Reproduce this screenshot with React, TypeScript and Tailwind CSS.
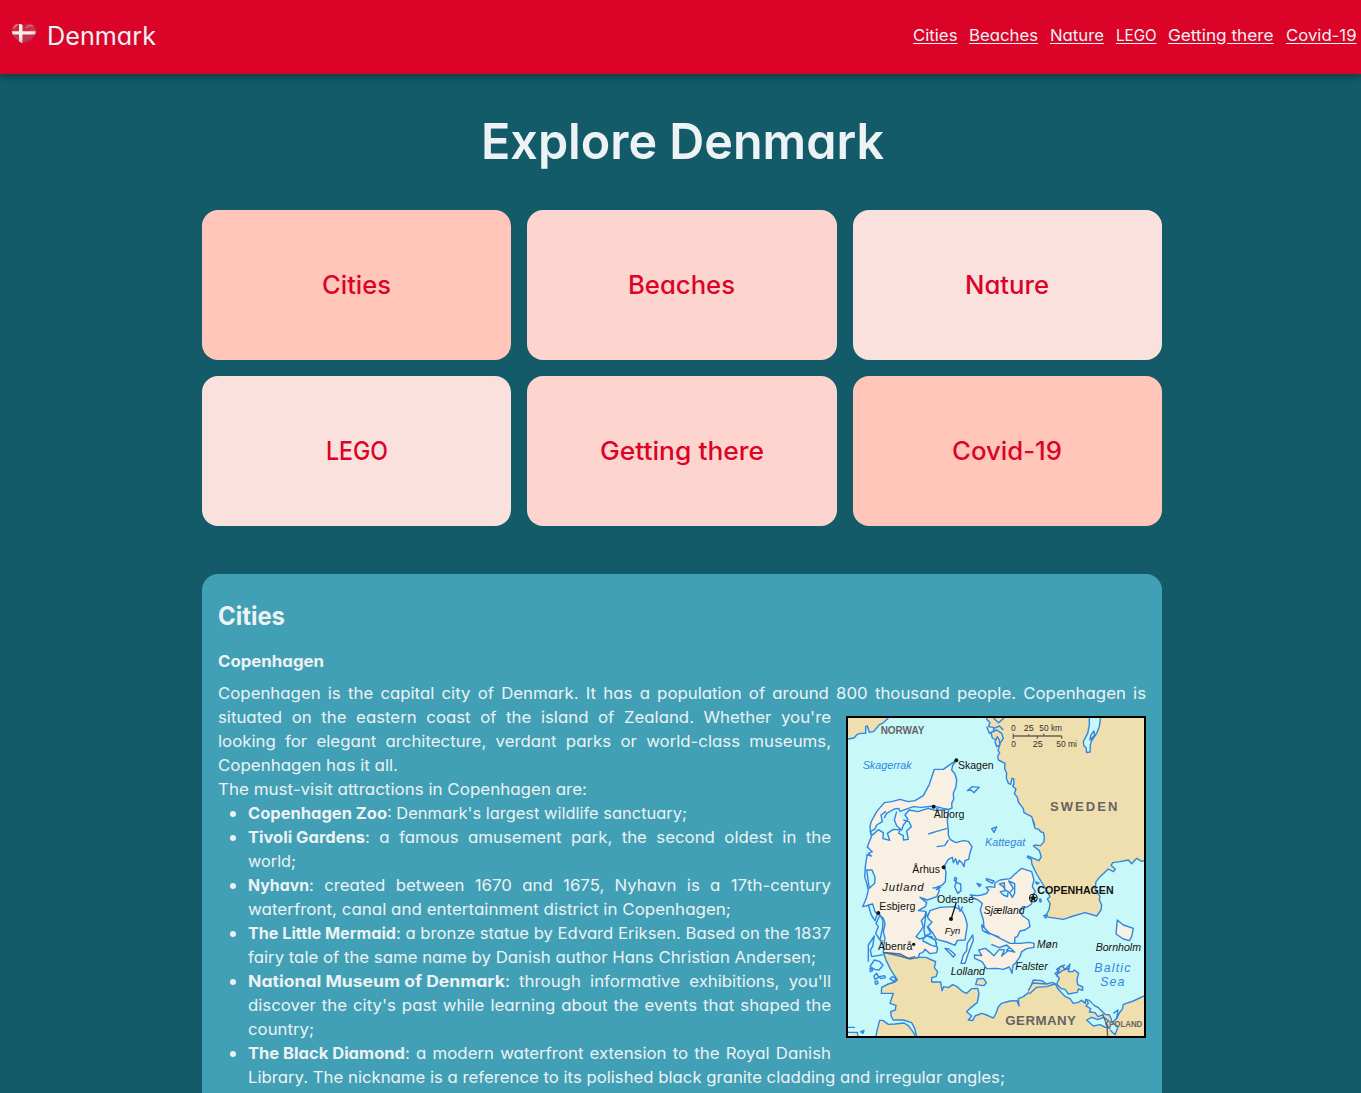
import { useLayoutEffect, useRef } from "react";
import type { ReactNode } from "react";

type RunProps = { w: number; children: string; justify?: boolean; className?: string; textClass?: string };

/* A single run of text set to an exact measure, by glyph width or by word gaps. */
function Run({ w, children, justify = false, className = "", textClass = "" }: RunProps) {
  const ref = useRef<HTMLSpanElement>(null);
  useLayoutEffect(() => {
    const el = ref.current;
    if (!el) return;
    el.style.transform = "none";
    el.style.wordSpacing = "0px";
    const natural = el.getBoundingClientRect().width;
    if (justify) {
      const stretch = 1.05;
      el.style.wordSpacing = `${(w / stretch - natural) / (children.split(" ").length - 1)}px`;
      el.style.transform = `scaleX(${stretch})`;
    } else {
      el.style.transform = `scaleX(${w / natural})`;
    }
  }, [w, children, justify]);
  return (
    <span className={`inline-block whitespace-nowrap ${className}`} style={{ width: w }}>
      <span ref={ref} className={`inline-block origin-left ${textClass}`}>{children}</span>
    </span>
  );
}

const nav: [string, number][] = [
  ["Cities", 44.5],
  ["Beaches", 69],
  ["Nature", 54],
  ["LEGO", 40.5],
  ["Getting there", 105.5],
  ["Covid-19", 70.5],
];

const cards: [string, number, string][] = [
  ["Cities", 69, "bg-[#ffc6b9]"],
  ["Beaches", 107, "bg-[#fdd5ce]"],
  ["Nature", 84, "bg-[#fbe1dd]"],
  ["LEGO", 62, "bg-[#fbe1dd]"],
  ["Getting there", 164, "bg-[#fdd5ce]"],
  ["Covid-19", 110, "bg-[#ffc6b9]"],
];

function HeartFlag() {
  return (
    <svg className="h-[22px] w-[26px]" viewBox="0 0 26 22">
      <defs>
        <clipPath id="heart">
          <path d="M13 3C10 0 5 0 2.5 2.5C-1 7 1 13 6 17C9 19.5 11 20 13 20.5C16 19.5 20 18 23 14C26 9 25.5 4 22 2C19 0 15 0 13 3Z" />
        </clipPath>
        <radialGradient id="shade" cx="45%" cy="35%" r="65%">
          <stop offset="0.4" stopColor="#fff" stopOpacity="0.08" />
          <stop offset="1" stopColor="#5b1020" stopOpacity="0.45" />
        </radialGradient>
      </defs>
      <g clipPath="url(#heart)">
        <path d="M0 0H26V22H0Z" fill="#c91431" />
        <path d="M8 0H11.5V22H8ZM0 8.2H26V11.6H0Z" fill="#f5efed" />
        <path d="M0 0H26V22H0Z" fill="url(#shade)" />
        <path d="M3 5Q4 2 7 1.5M15 5Q18 1.5 22 3" stroke="#f28c9b" strokeWidth="1.3" fill="none" opacity="0.7" />
      </g>
    </svg>
  );
}

const land = "#f7f0e3";
const foreign = "#f0dfae";

function Label({ x, y, w, size = 32, fill = "#111", bold = false, italic = false, spaced = false, children }: {
  x: number; y: number; w: number; size?: number; fill?: string; bold?: boolean; italic?: boolean; spaced?: boolean; children: string;
}) {
  return (
    <text x={x} y={y} textLength={w} lengthAdjust={spaced ? "spacing" : "spacingAndGlyphs"} fontSize={size} fill={fill} stroke="none"
      fontWeight={bold ? 700 : 400} fontStyle={italic ? "italic" : "normal"}>
      {children}
    </text>
  );
}

function DenmarkMap() {
  return (
    <svg className="block h-[322px] w-[300px] bg-[#c9f8f8]" viewBox="18 18 900 966" fontFamily="Liberation Sans, Arial, sans-serif">
      <g stroke="#2f86e0" strokeWidth="4.2" strokeLinejoin="round" fill={foreign}>
        <path d="M10 10L150 10L143 26L128 40L118 44L112 52L100 65L88 67L82 48L77 50L77 70L62 70L52 73L42 84L18 88Z" />
        <path d="M440 10L440 28L450 38L445 50L460 52L462 62L453 68L457 84L468 90L467 102L478 108L474 122L479 128L473 138L475 150L495 160L494 176L500 190L499 205L505 220L512 223L516 205L521 206L522 222L518 228L528 238L523 250L532 262L535 276L550 296L552 308L575 320L584 345L578 330L585 355L596 358L603 366L610 367L613 380L612 395L602 407L585 405L580 408L598 422L604 440L597 452L580 445L564 438L562 442L574 448L576 463L590 492L608 522L625 550L630 560L622 567L630 580L627 600L615 620L670 628L700 618L735 608L770 618L783 600L785 585L778 570L780 560L765 535L768 515L780 500L805 477L820 485L826 478L813 466L818 458L840 455L865 450L875 461L890 445L905 454L925 448V10Z" />
        <path d="M472 80L465 95L470 110L480 105L478 90ZM440 50L448 70L470 60L485 70L490 85L480 100M460 24L476 38L492 24M462 55L478 48L490 60" />
        <path fill="#c9f8f8" d="M748 10L748 45L743 70L730 95L732 108L738 112L740 128L750 126L751 105L755 92L770 70L778 50L783 10ZM750 90L752 76L762 63L764 76Z" />
        <path d="M130 727L138 750L150 775L161 793L172 810L165 816L145 822L125 832L124 850L160 850L150 880L168 886L166 900L152 905L154 920L160 930L190 930L215 938L224 955L234 995H925V852L880 873L850 883L847 898L840 906L830 925L818 936L808 915L795 913L774 892L760 885L748 871L737 868L736 880L725 871L715 877L700 880L690 866L676 860L655 838L645 820L620 822L605 812L580 810L565 848L550 860L535 866L537 888L531 872L510 873L485 880L475 890L468 910L460 924L450 920L440 915L425 910L405 918L398 932L385 930L395 918L380 905L390 895L412 877L417 850L413 835L395 836L380 850L368 845L350 829L338 824L325 833L311 830L306 842L302 816L275 816L275 803L288 800L293 786L283 773L287 755L275 750L258 742L240 742L210 746L175 737Z" />
        <path d="M104 995L112 958L119 931L128 931L145 943L165 942L192 939L205 947L222 970L231 995ZM18 967L52 967L54 984M22 952L45 952M62 965L72 961L69 970Z" />
        <path d="M645 790L655 785L650 778L665 768L676 778L690 763L685 785L699 785L703 780L716 790L711 808L713 824L728 831L728 841L715 837L712 847L685 852L675 838L662 835L650 822L658 805ZM650 800L660 770L675 765M655 790L670 780L690 775" />
        <path d="M565 842L578 819L620 822L637 817L645 822L620 830L590 832L568 852M407 824L412 807L430 805L439 818L432 827Z" />
        <path fill="#c9f8f8" d="M740 930L755 922L774 929L790 922L806 932L797 942L810 955L794 951L780 944L760 948ZM740 868L745 880L738 888L752 896L748 906L765 908L774 920L790 914M820 910L834 900L830 925L815 940M820 940L834 950L825 974L810 960" />
      </g>
      <g stroke="#2f86e0" strokeWidth="4.2" strokeLinejoin="round" fill={land}>
        <path d="M350 150L338 166L335 180L345 192L350 210L348 230L340 250L341 268L335 280L336 294L326 298L322 335L325 360L325 375L330 388L348 398L370 392L385 394L396 410L390 428L386 448L375 451L372 470L367 460L358 451L352 463L347 446L340 458L337 442L325 448L312 470L318 485L316 515L306 526L292 530L298 542L290 560L262 570L240 562L260 578L256 590L235 602L258 604L255 618L244 632L250 650L240 665L228 680L238 687L255 682L270 692L293 713L290 728L270 731L255 718L248 728L239 730L235 742L210 747L180 738L130 727L131 710L135 685L130 665L135 642L130 625L118 615L97 602L85 586L68 590L79 565L85 540L80 520L74 500L76 470L82 430L84 405L94 380L90 350L93 336L110 305L133 278L155 275L180 268L205 275L225 272L250 257L268 223L283 178L310 178L335 160Z" />
        <path d="M270 602L300 592L340 590L365 600L375 620L382 645L375 690L352 691L345 706L320 696L290 688L277 667L260 645L262 622Z" />
        <path d="M391 555L412 557L425 555L440 550L446 540L438 532L450 530L464 532L465 519L480 510L510 506L525 492L545 475L575 485L582 510L577 530L586 545L573 565L575 582L560 592L548 590L540 605L548 618L566 630L570 650L555 660L540 663L532 680L525 682L524 700L534 720L525 732L500 720L512 710L493 705L475 680L450 672L433 665L430 630L421 600L427 580L414 570L400 564Z" />
        <path d="M450 672L425 644L428 662L450 670L470 680L510 700L540 700L568 697L582 700L582 712L560 716L545 725L540 740L526 760L519 765L516 790L508 771L490 778L470 775L440 776L426 755L404 745L403 735L425 737L416 720L436 715L452 728L462 737L478 718L493 720L485 738L504 722L524 726L500 705L478 713L454 703" />
        <path d="M832 630L850 645L880 655L875 680L868 692L850 687L828 672ZM398 675L400 690L385 730L375 760L363 760L370 735L380 722L382 700ZM255 677L275 680L290 700L282 708L255 685ZM315 715L326 717L346 734L340 741Z" />
      </g>
      <g stroke="#2f86e0" strokeWidth="4.2" strokeLinejoin="round" fill="#c9f8f8">
        <path d="M133 324L140 310L163 297L176 295L180 304L203 296L220 290L245 292L280 288L310 295L325 298L305 300L285 301L265 295L233 305L208 300L195 315L204 328L190 345L185 360L160 358L142 370L149 391L129 386L130 368L115 359L98 375L90 365L104 358L110 345L127 335L123 315L138 304M170 305L163 330L170 347L181 357L176 370L190 377L190 390L205 388L200 363L214 350L207 335L190 330" />
        <path fill="none" d="M265 372L290 364L322 355M290 410L314 407L325 390" />
        <path d="M80 480L96 480L105 502L104 520L88 535L84 510ZM80 410L97 425L85 430L94 438L79 434M85 585L98 582L105 605L112 611L105 632L94 615ZM120 615L129 632L128 653L120 690L107 670L115 650L108 640Z" />
        <path fill="none" d="M85 755L85 705L103 678L98 709L91 720L95 740L130 734M90 770L103 750L118 754L129 766L117 780L104 778ZM102 798L110 790L116 802L105 808ZM118 800L134 797L136 803L122 806ZM150 806L157 800L168 805L162 815ZM95 776L90 776L91 785L98 782ZM105 815L112 813L114 821L107 823Z" />
        <path d="M348 517L362 522L363 542L353 550L344 530ZM345 502L350 505L348 515L343 511ZM382 242L396 230L418 232L410 239L402 248L393 240ZM411 520L423 524L418 530ZM439 506L462 513L457 520L440 511ZM455 356L470 351L462 367ZM587 516L597 519L590 522ZM602 567L604 574L600 576L598 568ZM611 617L622 615L617 624ZM258 607L264 625L276 637L262 651L273 670L255 678L252 660ZM249 687L260 677L286 690L290 710L275 706L249 693Z" />
        <path d="M478 522L493 518L494 540L505 545L502 560L490 555L481 545L497 542L490 530ZM506 513L524 521L524 550L517 562L509 548L520 535ZM278 534L302 532L288 540M355 585L360 604L368 590" />
      </g>
      <g stroke="#64615a" strokeWidth="4" fill="none">
        <path d="M130 727L180 732L205 745L226 740M788 913L801 945L803 982M520 78H665M520 71V86M566 73V79M592 78V86M611 71V79M665 78V86" />
      </g>
      <path d="M349 577L334 625" stroke="#111" strokeWidth="4" />
      <g fill="#111">
        <circle cx="349" cy="151" r="6" /><circle cx="281" cy="290" r="6" /><circle cx="311" cy="472" r="6" />
        <circle cx="115" cy="609" r="6" /><circle cx="333" cy="627" r="6" /><circle cx="221" cy="703" r="5" />
        <circle cx="580" cy="564" r="12" fill="none" stroke="#111" strokeWidth="3" />
        <path d="M580 552L583 560L592 561L585 566L588 575L580 570L572 575L575 566L568 561L577 560Z" />
      </g>
      <Label x={122} y={71} w={131} size={32} bold fill="#646464">NORWAY</Label>
      <Label x={68} y={178} w={147} italic fill="#2f86e0">Skagerrak</Label>
      <Label x={354} y={177} w={107}>Skagen</Label>
      <Label x={281} y={325} w={92}>Ålborg</Label>
      <Label x={513} y={63} w={14} size={25} fill="#333">0</Label>
      <Label x={551} y={63} w={30} size={25} fill="#333">25</Label>
      <Label x={598} y={63} w={68} size={25} fill="#333">50 km</Label>
      <Label x={514} y={110} w={14} size={25} fill="#333">0</Label>
      <Label x={578} y={110} w={30} size={25} fill="#333">25</Label>
      <Label x={649} y={110} w={62} size={25} fill="#333">50 mi</Label>
      <Label x={630} y={303} w={202} size={39} bold spaced fill="#646464">SWEDEN</Label>
      <Label x={435} y={409} w={121} italic fill="#2f86e0">Kattegat</Label>
      <Label x={217} y={489} w={83}>Århus</Label>
      <Label x={127} y={543} w={124} size={34} italic spaced>Jutland</Label>
      <Label x={118} y={600} w={108}>Esbjerg</Label>
      <Label x={291} y={580} w={111}>Odense</Label>
      <Label x={431} y={613} w={123} italic>Sjælland</Label>
      <Label x={314} y={671} w={47} size={29} italic>Fyn</Label>
      <Label x={592} y={551} w={229} size={32} bold>COPENHAGEN</Label>
      <Label x={114} y={719} w={103}>Åbenrå</Label>
      <Label x={332} y={794} w={103} italic>Lolland</Label>
      <Label x={591} y={714} w={62} italic>Møn</Label>
      <Label x={526} y={780} w={97} italic>Falster</Label>
      <Label x={767} y={724} w={136} italic>Bornholm</Label>
      <Label x={763} y={785} w={108} size={37} italic spaced fill="#2f86e0">Baltic</Label>
      <Label x={781} y={828} w={72} size={37} italic spaced fill="#2f86e0">Sea</Label>
      <Label x={496} y={945} w={212} size={40} bold spaced fill="#646464">GERMANY</Label>
      <Label x={807} y={952} w={100} size={25} bold fill="#646464">POLAND</Label>
      <rect x="21" y="21" width="894" height="960" fill="none" stroke="#000" strokeWidth="6" />
    </svg>
  );
}

function Item({ name, nameW, children }: { name: string; nameW: number; children: ReactNode }) {
  return (
    <li className="flex">
      <span className="mt-[10px] mr-3 ml-3 size-1.5 shrink-0 rounded-full bg-[#edf2f4]" />
      <p className="whitespace-nowrap">
        <Run w={nameW} className="font-bold">{name}</Run>
        {children}
      </p>
    </li>
  );
}

export default function App() {
  return (
    <div className="h-[1093px] overflow-hidden bg-[#135b68] font-[Inter,sans-serif] text-base leading-6 text-[#edf2f4] [font-feature-settings:'cv11']">
      <header className="relative flex h-[74px] items-center justify-between bg-[#db0328] pr-[5px] pl-[11px] shadow-[0_2px_8px_rgba(0,0,0,0.4)]">
        <div className="flex items-center gap-[10px] pb-1.5">
          <HeartFlag />
          <Run w={109} className="pt-[3px] text-[25px] leading-8">Denmark</Run>
        </div>
        <nav className="flex gap-[11.8px] pb-[5px]">
          {nav.map(([t, w]) => (
            <a key={t} href="#cities">
              <Run w={w} textClass="underline underline-offset-2">{t}</Run>
            </a>
          ))}
        </nav>
      </header>
      <main className="flex w-[1364px] flex-col items-center">
        <h1 className="mt-[27px] flex h-20 items-center text-[50px] font-semibold">
          <Run w={403}>Explore Denmark</Run>
        </h1>
        <div className="mt-[29px] grid w-[960px] grid-cols-3 gap-4">
          {cards.map(([t, w, bg]) => (
            <div key={t} className={`flex h-[150px] items-center justify-center rounded-2xl text-[25px] font-medium text-[#db0328] ${bg}`}>
              <Run w={w}>{t}</Run>
            </div>
          ))}
        </div>
        <section className="mt-12 h-[560px] w-[960px] rounded-t-2xl bg-[#41a0b5] px-4 pt-6">
          <h2 className="text-[25px] leading-9 font-bold"><Run w={67}>Cities</Run></h2>
          <h3 className="mt-[15px] font-bold"><Run w={106}>Copenhagen</Run></h3>
          <p className="mt-2">
            <Run justify w={928}>Copenhagen is the capital city of Denmark. It has a population of around 800 thousand people. Copenhagen is</Run>
          </p>
          <div className="flex">
            <div className="w-[628px] shrink-0">
              <p className="flex flex-col items-start">
                <Run justify w={613}>situated on the eastern coast of the island of Zealand. Whether you're</Run>
                <Run justify w={613}>looking for elegant architecture, verdant parks or world-class museums,</Run>
                <Run w={180}>Copenhagen has it all.</Run>
                <Run w={369}>The must-visit attractions in Copenhagen are:</Run>
              </p>
              <ul>
                <Item name="Copenhagen Zoo" nameW={139}>
                  <Run w={300}>: Denmark's largest wildlife sanctuary;</Run>
                </Item>
                <Item name="Tivoli Gardens" nameW={117}>
                  <Run justify w={466}>: a famous amusement park, the second oldest in the</Run><br />
                  <Run w={48}>world;</Run>
                </Item>
                <Item name="Nyhavn" nameW={61}>
                  <Run justify w={522}>: created between 1670 and 1675, Nyhavn is a 17th-century</Run><br />
                  <Run w={483}>waterfront, canal and entertainment district in Copenhagen;</Run>
                </Item>
                <Item name="The Little Mermaid" nameW={148}>
                  <Run w={435}>: a bronze statue by Edvard Eriksen. Based on the 1837</Run><br />
                  <Run w={568}>fairy tale of the same name by Danish author Hans Christian Andersen;</Run>
                </Item>
                <Item name="National Museum of Denmark" nameW={257}>
                  <Run justify w={326}>: through informative exhibitions, you'll</Run><br />
                  <Run justify w={583}>discover the city's past while learning about the events that shaped the</Run><br />
                  <Run w={66}>country;</Run>
                </Item>
                <Item name="The Black Diamond" nameW={157}>
                  <Run justify w={426}>: a modern waterfront extension to the Royal Danish</Run><br />
                  <Run w={757}>Library. The nickname is a reference to its polished black granite cladding and irregular angles;</Run>
                </Item>
              </ul>
            </div>
            <div className="pt-[11px]">
              <DenmarkMap />
            </div>
          </div>
        </section>
      </main>
    </div>
  );
}
